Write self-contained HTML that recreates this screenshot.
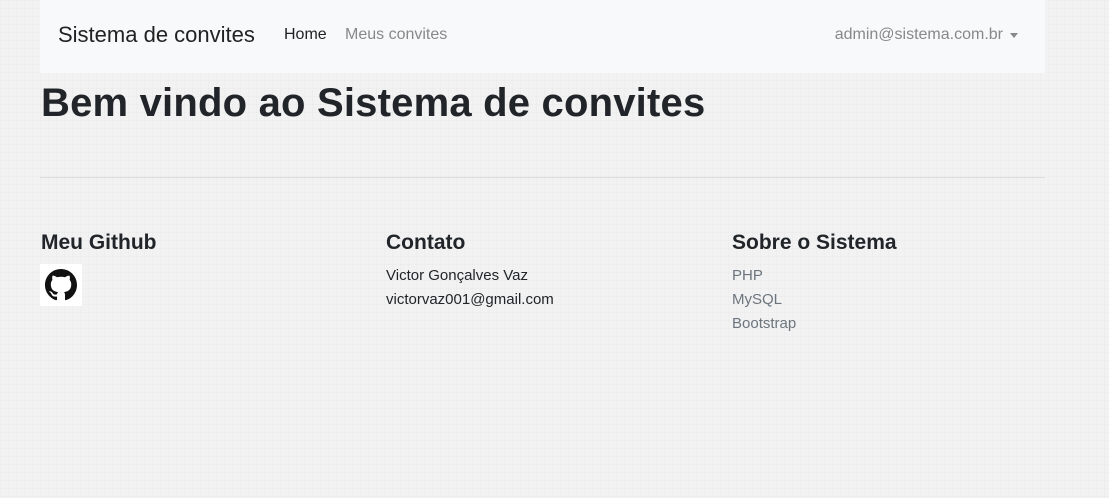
<!DOCTYPE html>
<html><head><meta charset="utf-8"><style>
body{margin:0;background:#f2f2f2;background-image:linear-gradient(rgba(0,0,0,.015) 1px,transparent 1px),linear-gradient(90deg,rgba(0,0,0,.015) 1px,transparent 1px);background-size:8px 8px;font-family:"Liberation Sans",sans-serif;color:#212529;width:1109px;height:498px;overflow:hidden;position:relative}
.nav{position:absolute;left:40px;top:0;width:1005px;height:73px;background:#f8f9fa}
.nav span{position:absolute;top:0;line-height:70px}
.brand{left:18px;font-size:22px;color:#222}
.l1{left:244px;font-size:16px;color:#222}
.l2{left:305px;font-size:16px;color:#888}
.user{right:42px;font-size:16px;color:#888}
.caret{position:absolute;right:27px;top:33px;border-left:4px solid transparent;border-right:4px solid transparent;border-top:5px solid #888}
h1{position:absolute;left:41px;top:78px;margin:0;font-size:40px;font-weight:bold;line-height:50px;letter-spacing:0.2px}
hr{position:absolute;left:40px;top:177px;width:1005px;margin:0;border:0;border-top:1px solid #ddd}
.col{position:absolute;top:230px}
.col h3{margin:0 0 8px;font-size:21px;line-height:26px;font-weight:bold}
.col p{margin:0;font-size:15px;line-height:24px}
.gh{width:42px;height:42px;background:#fff;display:flex;align-items:center;justify-content:center}
</style></head><body>
<div class="nav"><span class="brand">Sistema de convites</span><span class="l1">Home</span><span class="l2">Meus convites</span><span class="user">admin@sistema.com.br</span><div class="caret"></div></div>
<h1>Bem vindo ao Sistema de convites</h1>
<hr>
<div class="col" style="left:41px"><h3>Meu Github</h3><div class="gh" style="margin-left:-1px"><svg width="32" height="32" viewBox="0 0 16 16"><path fill="#111" d="M8 0C3.580 0 0 3.58 0 8c0 3.54 2.29 6.53 5.47 7.59.4.07.55-.17.55-.38 0-.19-.01-.82-.01-1.49-2.01.37-2.530-.49-2.690-.94-.09-.23-.48-.94-.82-1.13-.28-.15-.68-.52-.01-.53.63-.01 1.08.58 1.23.82.72 1.21 1.87.87 2.33.66.07-.52.28-.87.51-1.07-1.78-.2-3.64-.89-3.64-3.950 0-.87.31-1.59.82-2.15-.08-.2-.36-1.02.08-2.12 0 0 .67-.21 2.2.82.64-.18 1.32-.27 2-.27.68 0 1.36.09 2 .27 1.53-1.04 2.2-.82 2.2-.82.44 1.1.16 1.92.08 2.12.51.56.82 1.27.82 2.15 0 3.07-1.87 3.75-3.65 3.95.29.25.54.73.54 1.48 0 1.07-.01 1.93-.01 2.2 0 .21.15.46.55.38A8.013 8.013 0 0016 8c0-4.42-3.58-8-8-8z"/></svg></div></div>
<div class="col" style="left:386px"><h3>Contato</h3><p>Victor Gonçalves Vaz</p><p>victorvaz001@gmail.com</p></div>
<div class="col" style="left:732px"><h3>Sobre o Sistema</h3><p style="color:#6c757d">PHP</p><p style="color:#6c757d">MySQL</p><p style="color:#6c757d">Bootstrap</p></div>
</body></html>
